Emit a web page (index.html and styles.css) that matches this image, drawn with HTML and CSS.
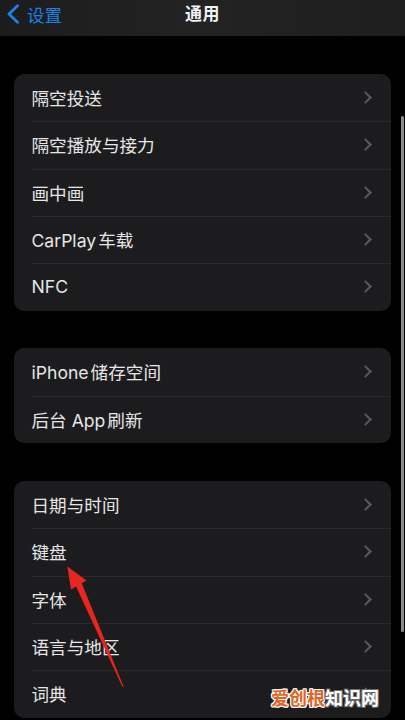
FILE: index.html
```html
<!DOCTYPE html>
<html lang="zh-CN">
<head>
    <meta charset="UTF-8">
    <meta name="viewport" content="width=device-width, initial-scale=1.0">
    <title>通用</title>
    <link rel="stylesheet" href="styles.css">
</head>
<body>
    <div class="screen">
        <header class="nav-bar">
            <div class="nav-back">
                <svg class="back-icon" width="14" height="20" viewBox="0 0 14 20">
                    <path d="M11.5 1.8 L3 10 L11.5 18.2" fill="none" stroke="#1a82e8" stroke-width="2.8" stroke-linecap="round" stroke-linejoin="round"/>
                </svg>
                <span>设置</span>
            </div>
            <div class="nav-title">通用</div>
            <div></div>
        </header>

        <main class="content">
            <section class="group">
                <div class="row"><span>隔空投送</span><i class="chevron"></i></div>
                <div class="row"><span>隔空播放与接力</span><i class="chevron"></i></div>
                <div class="row"><span>画中画</span><i class="chevron"></i></div>
                <div class="row"><span>CarPlay<span class="gap"></span>车载</span><i class="chevron"></i></div>
                <div class="row"><span>NFC</span><i class="chevron"></i></div>
            </section>

            <section class="group">
                <div class="row"><span>iPhone<span class="gap"></span>储存空间</span><i class="chevron"></i></div>
                <div class="row"><span>后台 App<span class="gap"></span>刷新</span><i class="chevron"></i></div>
            </section>

            <section class="group">
                <div class="row"><span>日期与时间</span><i class="chevron"></i></div>
                <div class="row"><span>键盘</span><i class="chevron"></i></div>
                <div class="row"><span>字体</span><i class="chevron"></i></div>
                <div class="row"><span>语言与地区</span><i class="chevron"></i></div>
                <div class="row"><span>词典</span><i class="chevron"></i></div>
            </section>
        </main>

        <div class="scroll-indicator"></div>

        <!-- red hint arrow pointing at 键盘 -->
        <svg class="hint-arrow" width="405" height="720" viewBox="0 0 405 720">
            <polygon points="122.5,687 123.5,686.5 80,579 74,582" fill="#e8261f"/>
            <polygon points="67.3,566.5 86.5,580.5 71,589.5" fill="#e8261f"/>
        </svg>

        <div class="watermark"><span class="wm-orange">爱创根</span><span class="wm-white">知识网</span></div>
    </div>
</body>
</html>
```

FILE: styles.css
```css
body {
    margin: 0;
    padding: 0;
    background: #000000;
    font-family: "Inter", "Noto Sans CJK SC", sans-serif;
}
.screen {
    position: relative;
    width: 405px;
    height: 720px;
    overflow: hidden;
    background: #000000;
}
.nav-bar {
    display: grid;
    grid-template-columns: 1fr auto 1fr;
    height: 36px;
    background: linear-gradient(to right, #1c1c1c, #232323 50%, #1e1e1e);
    color: #f2f2f2;
}
.nav-back {
    display: flex;
    align-items: center;
    gap: 7px;
    height: 28px;
    padding-left: 6px;
    color: #1a82e8;
    font-size: 17.5px;
}
.back-icon {
    display: block;
}
.nav-title {
    line-height: 28px;
    font-size: 17px;
    font-weight: 600;
    letter-spacing: 0.5px;
}
.content {
    padding: 38px 14px 0;
}
.group {
    background: #1c1c1e;
    border-radius: 10px;
    margin-bottom: 37.8px;
    overflow: hidden;
}
.row {
    display: flex;
    align-items: center;
    justify-content: space-between;
    box-sizing: border-box;
    height: 47.33px;
    margin-left: 17.5px;
    padding-right: 19px;
    padding-bottom: 1px;
    border-top: 1px solid #2a2a2c;
    color: #e6e6e6;
    font-size: 17.6px;
}
.row:first-child {
    border-top: none;
}
.gap {
    display: inline-block;
    width: 2px;
}
.chevron {
    width: 7px;
    height: 7px;
    margin-right: 2px;
    border-top: 2px solid #5a5a5e;
    border-right: 2px solid #5a5a5e;
    transform: rotate(45deg);
}
.scroll-indicator {
    position: absolute;
    left: 401px;
    top: 116px;
    width: 3px;
    height: 516px;
    border-radius: 2px;
    background: #8a8a8c;
}
.hint-arrow {
    position: absolute;
    left: 0;
    top: 0;
}
.watermark {
    position: absolute;
    left: 271px;
    top: 688px;
    font-size: 18px;
    font-weight: 700;
    line-height: 22px;
    text-shadow:
        -1px -1px 0 #ffffff, 1px -1px 0 #ffffff,
        -1px 1px 0 #ffffff, 1px 1px 0 #ffffff,
        0 -1px 0 #ffffff, 0 1px 0 #ffffff,
        -1px 0 0 #ffffff, 1px 0 0 #ffffff;
}
.wm-orange {
    color: #e06424;
}
.wm-white {
    color: #ffffff;
    text-shadow:
        -1px -1px 0 #6b6b6b, 1px -1px 0 #6b6b6b,
        -1px 1px 0 #6b6b6b, 1px 1px 0 #6b6b6b;
}
```
